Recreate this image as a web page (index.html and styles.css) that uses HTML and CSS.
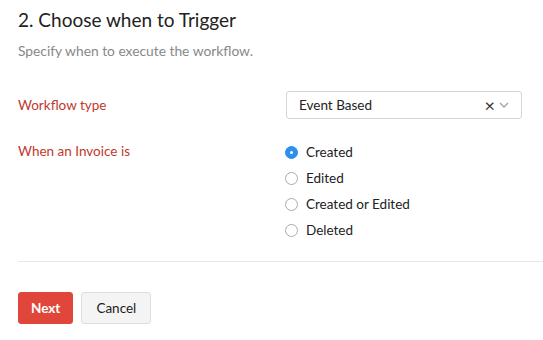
FILE: index.html
```html
<!DOCTYPE html>
<html lang="en">
<head>
    <meta charset="UTF-8">
    <title>Choose when to Trigger</title>
    <link rel="stylesheet" href="styles.css">
</head>
<body>
    <div class="page">
        <h2 class="step-title">2. Choose when to Trigger</h2>
        <p class="step-desc">Specify when to execute the workflow.</p>

        <div class="form-row">
            <label class="field-label">Workflow type</label>
            <div class="select">
                <span class="select-value">Event Based</span>
                <span class="select-clear">&times;</span>
                <svg class="select-arrow" width="10" height="6" viewBox="0 0 10 6"><path d="M1 1l4 4 4-4" fill="none" stroke="#aaa" stroke-width="1.5"/></svg>
            </div>
        </div>

        <div class="form-row radios-row">
            <label class="field-label">When an Invoice is</label>
            <div class="radios">
                <label class="radio checked"><span class="dot"></span>Created</label>
                <label class="radio"><span class="dot"></span>Edited</label>
                <label class="radio"><span class="dot"></span>Created or Edited</label>
                <label class="radio"><span class="dot"></span>Deleted</label>
            </div>
        </div>

        <div class="divider"></div>

        <div class="actions">
            <button class="btn btn-primary">Next</button>
            <button class="btn btn-default">Cancel</button>
        </div>
    </div>
</body>
</html>
```

FILE: styles.css
```css
body {
    margin: 0;
    font-family: Lato, "Open Sans", sans-serif;
    color: #222;
    background: white;
}
.page {
    padding: 8px 0 0 18px;
}
.step-title {
    margin: 0;
    font-size: 19px;
    font-weight: normal;
    color: #222;
    line-height: 24px;
}
.step-desc {
    margin: 10px 0 0;
    font-size: 13.8px;
    color: #888;
    line-height: 18px;
}
.form-row {
    display: grid;
    grid-template-columns: 268px 236px;
    align-items: center;
    margin-top: 31px;
}
.field-label {
    font-size: 13.5px;
    color: #c0392b;
}
.select {
    display: flex;
    align-items: center;
    height: 28px;
    border: 1px solid #d6d6d6;
    border-radius: 3px;
    padding: 0 12px;
    box-sizing: border-box;
    font-size: 13.5px;
}
.select-value {
    flex: 1;
}
.select-clear {
    font-size: 18px;
    color: #333;
    margin-right: 4px;
}
.radios-row {
    align-items: start;
    margin-top: 24px;
}
.radios {
    display: flex;
    flex-direction: column;
    gap: 8px;
}
.radio {
    display: flex;
    align-items: center;
    font-size: 13.5px;
    line-height: 18px;
    margin-left: -1px;
}
.dot {
    width: 11px;
    height: 11px;
    border: 1px solid #aaa;
    border-radius: 50%;
    margin-right: 8px;
    box-sizing: content-box;
}
.radio.checked .dot {
    background: #2d8ff0;
    border-color: #2d8ff0;
    position: relative;
}
.radio.checked .dot::after {
    content: "";
    position: absolute;
    left: 4px;
    top: 4px;
    width: 3px;
    height: 3px;
    border-radius: 50%;
    background: white;
}
.divider {
    margin-top: 22px;
    border-top: 1px solid #e8e8e8;
}
.actions {
    display: flex;
    gap: 8px;
    margin-top: 30px;
}
.btn {
    font-family: inherit;
    font-size: 13.5px;
    height: 32px;
    border-radius: 3px;
    padding: 0 12px;
}
.btn-primary {
    background: #e0463a;
    color: white;
    border: 1px solid #e0463a;
    font-weight: bold;
}
.btn-default {
    background: #f4f4f4;
    color: #222;
    border: 1px solid #ddd;
    padding: 0 14px;
}
```
